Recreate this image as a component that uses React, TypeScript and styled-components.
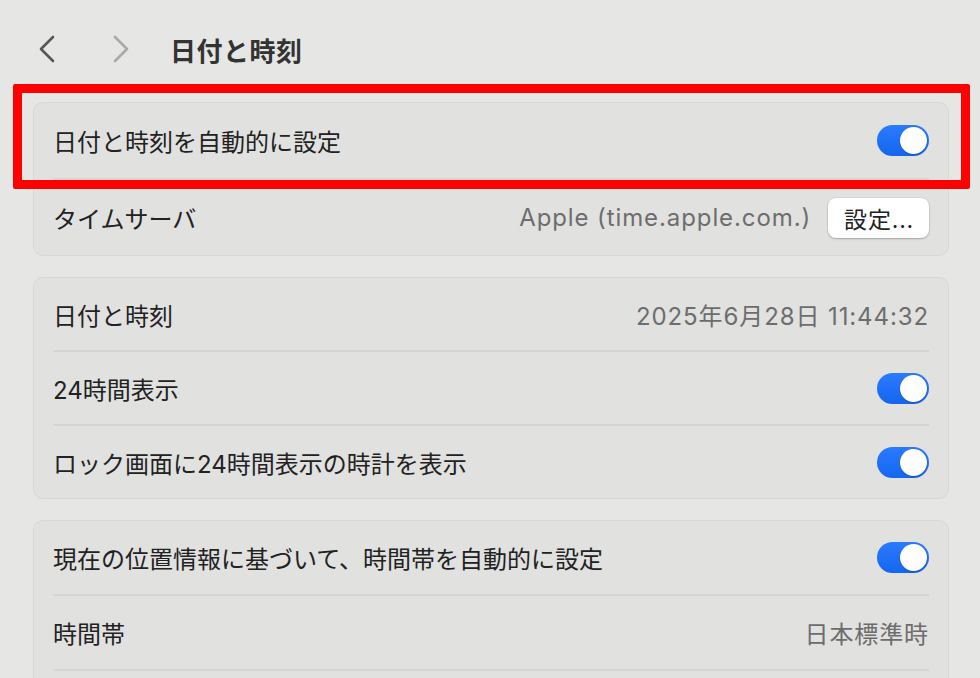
import React from 'react';
import styled, { createGlobalStyle } from 'styled-components';

const GlobalStyle = createGlobalStyle`
  html, body {
    margin: 0;
    padding: 0;
    background: #e6e6e5;
  }
  body {
    font-family: Inter, "Noto Sans CJK JP", "Noto Sans", sans-serif;
    color: #222222;
  }
`;

const Page = styled.div`
  width: 980px;
  height: 678px;
  overflow: hidden;
  box-sizing: border-box;
  padding: 0 31px 0 33px;
  background: #e6e6e5;
`;

const Header = styled.div`
  display: flex;
  align-items: center;
  height: 98px;
  margin-bottom: 4px;
`;

const NavIcon = styled.svg<{ $dim?: boolean; $gap: number }>`
  display: block;
  flex: none;
  margin-left: ${(p) => p.$gap}px;
  color: ${(p) => (p.$dim ? '#a9a9a9' : '#565656')};
`;

const Title = styled.h1`
  margin: 0 0 0 38px;
  font-size: 26px;
  font-weight: 600;
  color: #333333;
  letter-spacing: 0.5px;
`;

const Stack = styled.div`
  display: flex;
  flex-direction: column;
  gap: 21px;
`;

const Highlight = styled.div`
  position: relative;
`;

const RedBox = styled.div`
  position: absolute;
  top: -18px;
  left: -20px;
  right: -21px;
  height: 105px;
  box-sizing: border-box;
  border: 9px solid #ff0000;
  border-radius: 2px;
  pointer-events: none;
  z-index: 2;
`;

const Card = styled.div<{ $rowHeight: number }>`
  background: #e1e1e0;
  border: 1px solid #d7d7d6;
  border-radius: 10px;
  overflow: hidden;
  --row-h: ${(p) => p.$rowHeight}px;
`;

const Row = styled.div`
  display: flex;
  align-items: center;
  justify-content: space-between;
  height: var(--row-h);
  margin: 0 19px;
  & + & {
    border-top: 2px solid #d5d5d4;
  }
`;

const Label = styled.span`
  font-size: 24px;
  color: #222222;
`;

const Value = styled.span`
  font-size: 24px;
  letter-spacing: 0.9px;
  color: #6d6d6d;
`;

const Right = styled.div`
  display: flex;
  align-items: center;
  gap: 17px;
`;

const Button = styled.button`
  height: 40px;
  padding: 0 15px 0 16px;
  border: none;
  border-radius: 8px;
  background: #ffffff;
  box-shadow: 0 1px 2px rgba(0, 0, 0, 0.25), 0 0 0 0.5px rgba(0, 0, 0, 0.08);
  font-family: inherit;
  font-size: 23px;
  letter-spacing: 0.8px;
  color: #222222;
`;

const Track = styled.div`
  position: relative;
  width: 52px;
  height: 31px;
  border-radius: 16px;
  background: linear-gradient(#2a7bff, #1466ef);
  flex: none;
`;

const Knob = styled.div`
  position: absolute;
  top: 2px;
  right: 2px;
  width: 27px;
  height: 27px;
  border-radius: 50%;
  background: #ffffff;
  box-shadow: 0 1px 2px rgba(0, 0, 0, 0.2);
`;

const Toggle = () => (
  <Track>
    <Knob />
  </Track>
);

const Chevron = ({ back, gap }: { back?: boolean; gap: number }) => (
  <NavIcon $dim={!back} $gap={gap} width="22" height="28" viewBox="0 0 22 28">
    <polyline
      points={back ? '17,2 5,14 17,26' : '5,2 17,14 5,26'}
      fill="none"
      stroke="currentColor"
      strokeWidth="2.6"
      strokeLinecap="round"
      strokeLinejoin="round"
    />
  </NavIcon>
);

export default function App() {
  return (
    <>
      <GlobalStyle />
      <Page>
        <Header>
          <Chevron back gap={3} />
          <Chevron gap={52} />
          <Title>日付と時刻</Title>
        </Header>
        <Stack>
          <Highlight>
            <RedBox />
            <Card $rowHeight={75}>
              <Row>
                <Label>日付と時刻を自動的に設定</Label>
                <Toggle />
              </Row>
              <Row>
                <Label>タイムサーバ</Label>
                <Right>
                  <Value>Apple (time.apple.com.)</Value>
                  <Button>設定...</Button>
                </Right>
              </Row>
            </Card>
          </Highlight>
          <Card $rowHeight={72}>
            <Row>
              <Label>日付と時刻</Label>
              <Value>2025年6月28日 11:44:32</Value>
            </Row>
            <Row>
              <Label>24時間表示</Label>
              <Toggle />
            </Row>
            <Row>
              <Label>ロック画面に24時間表示の時計を表示</Label>
              <Toggle />
            </Row>
          </Card>
          <Card $rowHeight={73}>
            <Row>
              <Label>現在の位置情報に基づいて、時間帯を自動的に設定</Label>
              <Toggle />
            </Row>
            <Row>
              <Label>時間帯</Label>
              <Value>日本標準時</Value>
            </Row>
            <Row>
              <Label>&nbsp;</Label>
            </Row>
          </Card>
        </Stack>
      </Page>
    </>
  );
}
